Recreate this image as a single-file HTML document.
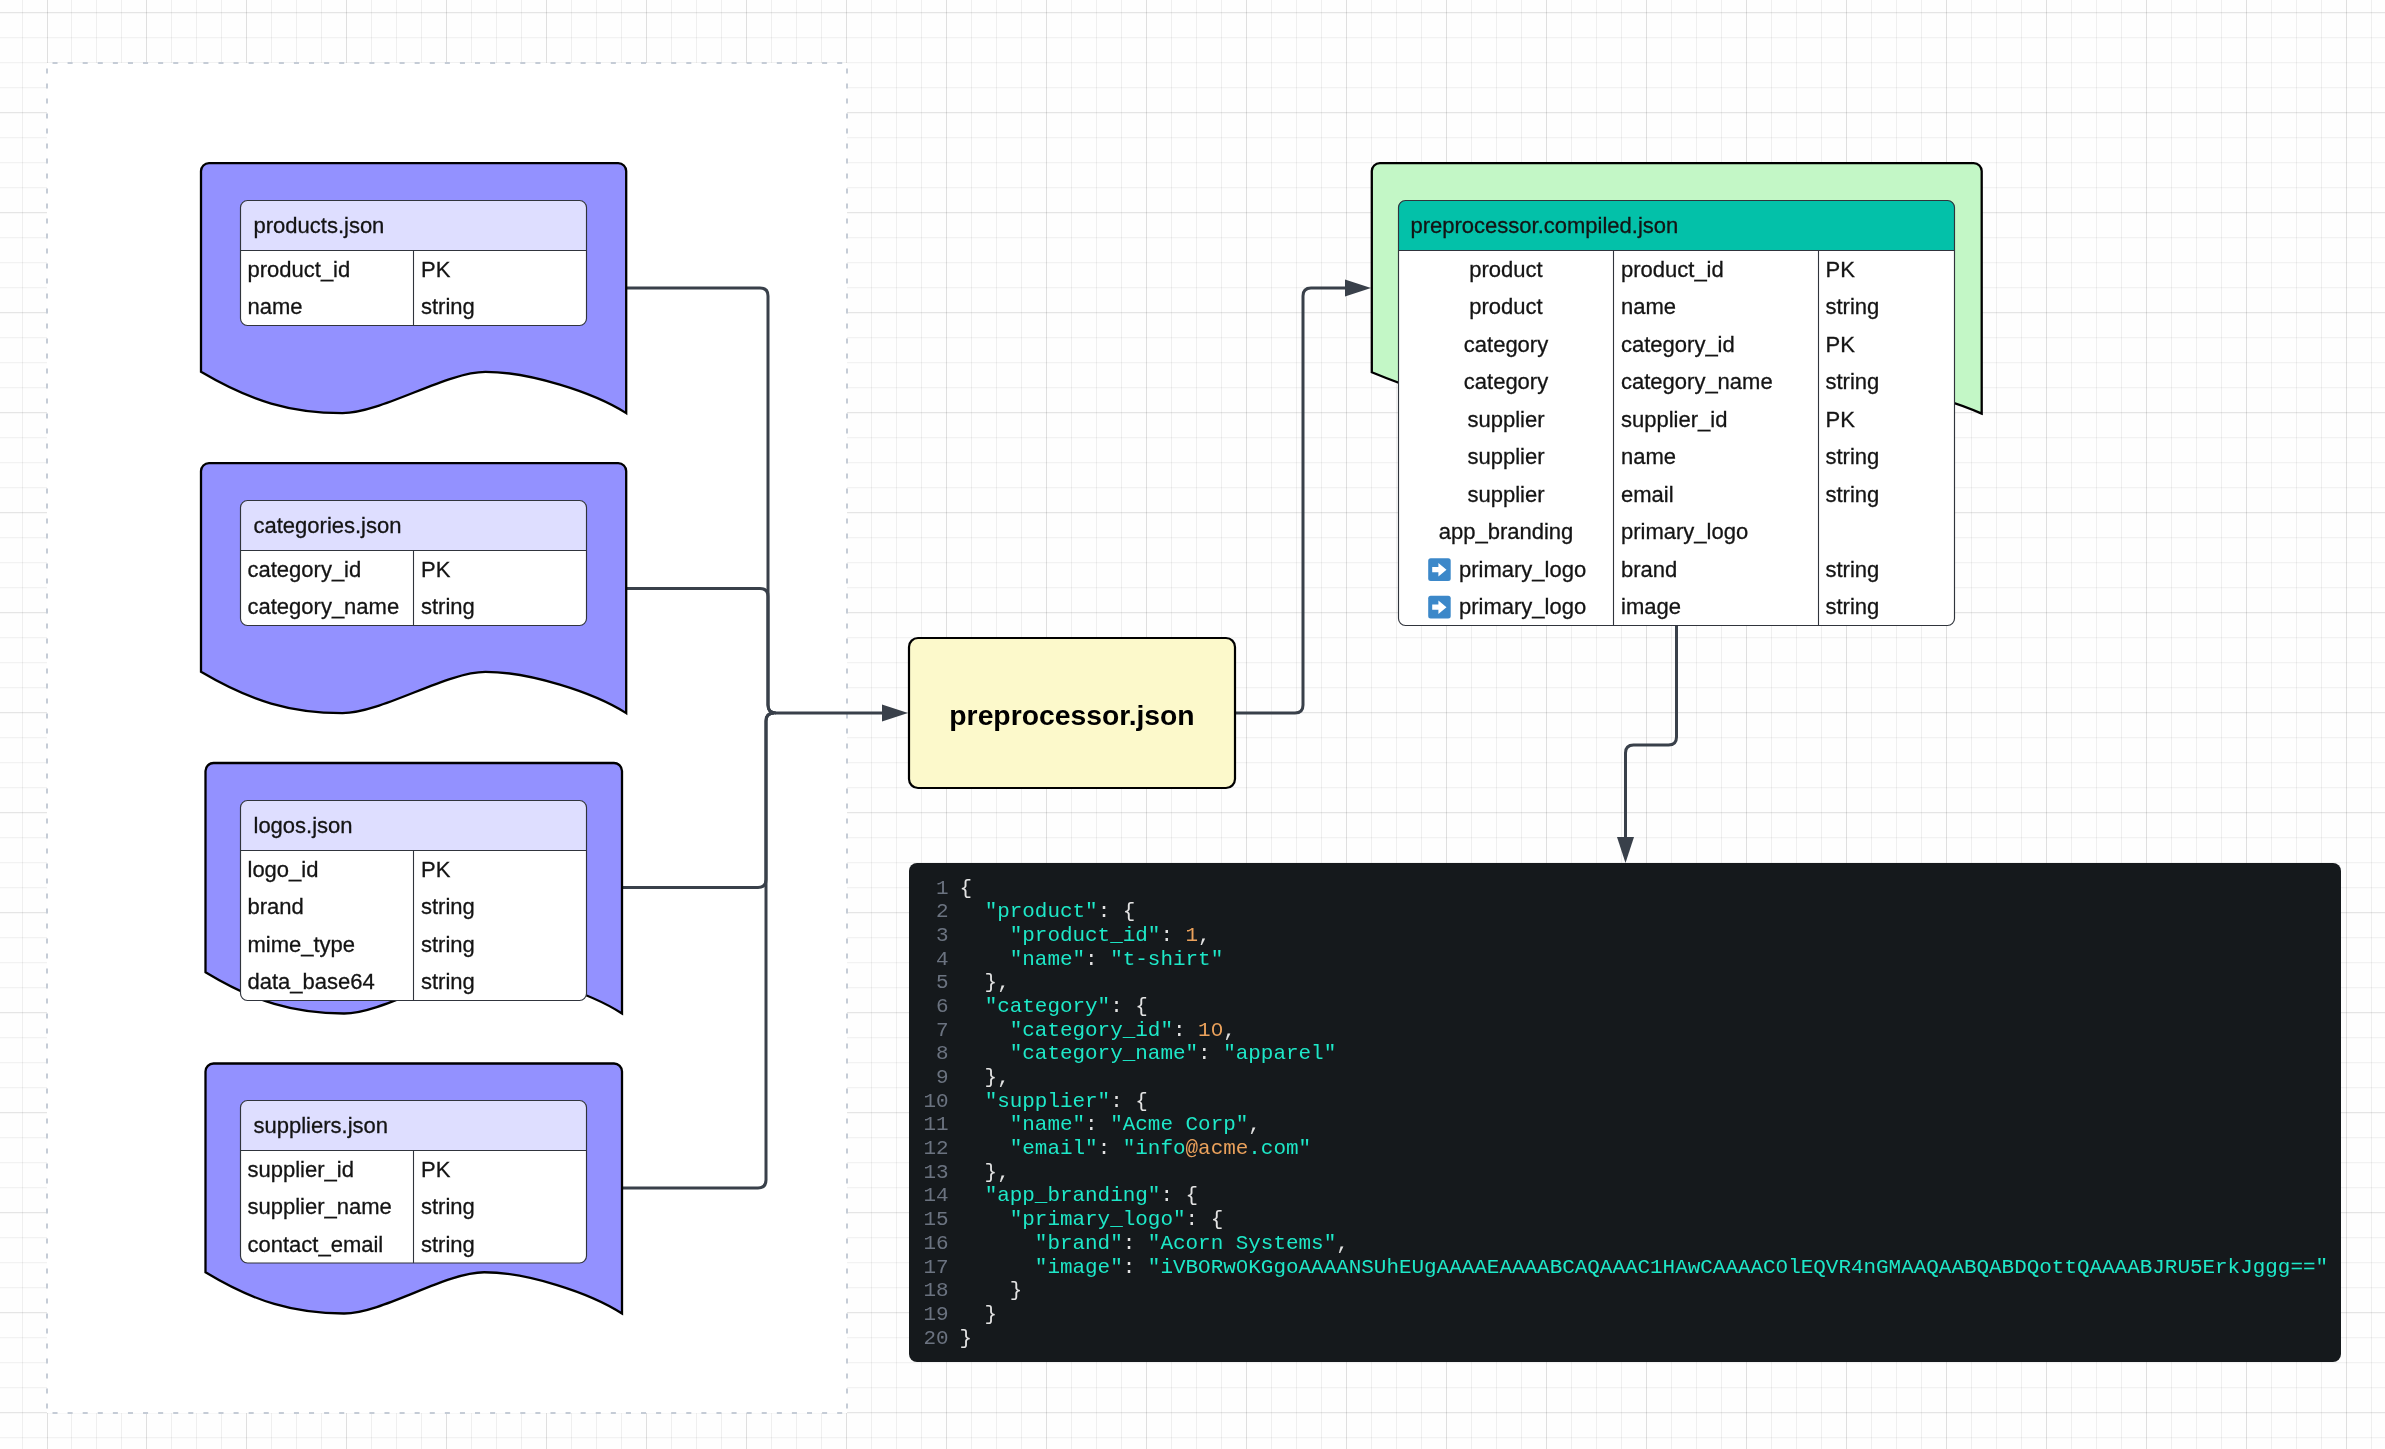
<!DOCTYPE html>
<html><head><meta charset="utf-8"><title>diagram</title>
<style>
html,body{margin:0;padding:0;background:#fefefe;}
body{width:2385px;height:1449px;overflow:hidden;position:relative;}
svg{position:absolute;left:0;top:0;will-change:transform;}
text{font-family:"Liberation Sans",sans-serif;}
.t{stroke:#141414;stroke-width:0.3px;}
.mono{font-family:"Liberation Mono",monospace;}
</style></head><body>
<svg width="2385" height="1449" viewBox="0 0 2385 1449">
<defs>
<pattern id="hminor" x="0" y="12.2" width="25" height="25" patternUnits="userSpaceOnUse"><rect x="0" y="0" width="25" height="1" fill="#000" fill-opacity="0.06"/></pattern>
<pattern id="hmajor" x="0" y="12.2" width="100" height="100" patternUnits="userSpaceOnUse"><rect x="0" y="0" width="100" height="1" fill="#000" fill-opacity="0.065"/></pattern>
<pattern id="vminor" x="21" y="0" width="25" height="25" patternUnits="userSpaceOnUse"><rect x="0" y="0" width="1" height="25" fill="#000" fill-opacity="0.06"/></pattern>
<pattern id="vmajor" x="46" y="0" width="100" height="100" patternUnits="userSpaceOnUse"><rect x="0" y="0" width="1" height="100" fill="#000" fill-opacity="0.065"/></pattern>
</defs>
<rect x="0" y="0" width="2385" height="1449" fill="#fefefe"/>
<rect x="0" y="0" width="2385" height="1449" fill="url(#hminor)"/>
<rect x="0" y="0" width="2385" height="1449" fill="url(#hmajor)"/>
<rect x="70" y="0" width="2315" height="1449" fill="url(#vminor)"/>
<rect x="70" y="0" width="2315" height="1449" fill="url(#vmajor)"/>
<rect x="22" y="0" width="1" height="1449" fill="#000" fill-opacity="0.06"/>
<rect x="47" y="0" width="1" height="1449" fill="#000" fill-opacity="0.06"/>
<rect x="47" y="0" width="1" height="1449" fill="#000" fill-opacity="0.065"/>

<rect x="47" y="63" width="800" height="1350" fill="#ffffff"/>
<path d="M47,63 L847,63" fill="none" stroke="#c5ccd6" stroke-width="2" stroke-dasharray="5.03 10.06" stroke-dashoffset="9.59"/>
<path d="M47,1413 L847,1413" fill="none" stroke="#c5ccd6" stroke-width="2" stroke-dasharray="5.03 10.06" stroke-dashoffset="9.59"/>
<path d="M847,63 L847,1413" fill="none" stroke="#c5ccd6" stroke-width="2" stroke-dasharray="5 10" stroke-dashoffset="9.5"/>
<path d="M47,63 L47,1413" fill="none" stroke="#c5ccd6" stroke-width="2" stroke-dasharray="5 10" stroke-dashoffset="9.5"/>
<path d="M626,288 L760,288 Q768,288 768,296 L768,705 Q768,713 776,713 L884,713" fill="none" stroke="#39404a" stroke-width="3" stroke-linejoin="round"/>
<path d="M626,588.5 L760,588.5 Q768,588.5 768,596.5 L768,705 Q768,713 776,713" fill="none" stroke="#39404a" stroke-width="3" stroke-linejoin="round"/>
<path d="M622,887.5 L758,887.5 Q766,887.5 766,879.5 L766,721 Q766,713 774,713" fill="none" stroke="#39404a" stroke-width="3" stroke-linejoin="round"/>
<path d="M622,1188 L758,1188 Q766,1188 766,1180 L766,721 Q766,713 774,713" fill="none" stroke="#39404a" stroke-width="3" stroke-linejoin="round"/>
<path d="M882,704.5 L908,713 L882,721.5 Z" fill="#39404a"/>
<path d="M1235,713 L1295,713 Q1303,713 1303,705 L1303,296 Q1303,288 1311,288 L1348,288" fill="none" stroke="#39404a" stroke-width="3" stroke-linejoin="round"/>
<path d="M1345,279.5 L1371,288 L1345,296.5 Z" fill="#39404a"/>
<path d="M1676.5,626 L1676.5,737 Q1676.5,745 1668.5,745 L1633.5,745 Q1625.5,745 1625.5,753 L1625.5,840" fill="none" stroke="#39404a" stroke-width="3" stroke-linejoin="round"/>
<path d="M1617,837 L1625.5,863 L1634,837 Z" fill="#39404a"/>
<path d="M201,171.1 A8,8 0 0 1 209,163.1 L618.2,163.1 A8,8 0 0 1 626.2,171.1 L626.2,413.1 C593.18,392.23 529.15,371.85 485.53,371.85 C446.52,371.85 381.48,413.10 342.47,413.10 C291.04,413.10 251.02,401.45 201.00,371.85 Z" fill="#9391ff" stroke="#000" stroke-width="2.3" stroke-linejoin="miter" stroke-miterlimit="10"/>
<rect x="240.5" y="200.5" width="346" height="125.0" rx="7" ry="7" fill="#ffffff"/>
<path d="M240.5,250.5 L240.5,207.5 Q240.5,200.5 247.5,200.5 L579.5,200.5 Q586.5,200.5 586.5,207.5 L586.5,250.5 Z" fill="#dedeff"/>
<line x1="240.5" y1="250.5" x2="586.5" y2="250.5" stroke="#30343c" stroke-width="1.15"/>
<line x1="413.5" y1="250.5" x2="413.5" y2="325.5" stroke="#30343c" stroke-width="1.1"/>
<rect x="240.5" y="200.5" width="346" height="125.0" rx="7" ry="7" fill="none" stroke="#30343c" stroke-width="1.15"/>
<text x="253.5" y="233.0" class="t" font-size="22" fill="#141414">products.json</text>
<text x="247.5" y="276.8" class="t" font-size="22" fill="#141414">product_id</text>
<text x="421.0" y="276.8" class="t" font-size="22" fill="#141414">PK</text>
<text x="247.5" y="314.3" class="t" font-size="22" fill="#141414">name</text>
<text x="421.0" y="314.3" class="t" font-size="22" fill="#141414">string</text>
<path d="M201,471.1 A8,8 0 0 1 209,463.1 L618.2,463.1 A8,8 0 0 1 626.2,471.1 L626.2,713.1 C593.18,692.23 529.15,671.85 485.53,671.85 C446.52,671.85 381.48,713.10 342.47,713.10 C291.04,713.10 251.02,701.45 201.00,671.85 Z" fill="#9391ff" stroke="#000" stroke-width="2.3" stroke-linejoin="miter" stroke-miterlimit="10"/>
<rect x="240.5" y="500.5" width="346" height="125.0" rx="7" ry="7" fill="#ffffff"/>
<path d="M240.5,550.5 L240.5,507.5 Q240.5,500.5 247.5,500.5 L579.5,500.5 Q586.5,500.5 586.5,507.5 L586.5,550.5 Z" fill="#dedeff"/>
<line x1="240.5" y1="550.5" x2="586.5" y2="550.5" stroke="#30343c" stroke-width="1.15"/>
<line x1="413.5" y1="550.5" x2="413.5" y2="625.5" stroke="#30343c" stroke-width="1.1"/>
<rect x="240.5" y="500.5" width="346" height="125.0" rx="7" ry="7" fill="none" stroke="#30343c" stroke-width="1.15"/>
<text x="253.5" y="533.0" class="t" font-size="22" fill="#141414">categories.json</text>
<text x="247.5" y="576.8" class="t" font-size="22" fill="#141414">category_id</text>
<text x="421.0" y="576.8" class="t" font-size="22" fill="#141414">PK</text>
<text x="247.5" y="614.3" class="t" font-size="22" fill="#141414">category_name</text>
<text x="421.0" y="614.3" class="t" font-size="22" fill="#141414">string</text>
<path d="M205.5,771 A8,8 0 0 1 213.5,763 L614.0,763 A8,8 0 0 1 622.0,771 L622.0,1013.5 C589.66,992.59 526.94,972.17 484.21,972.17 C445.99,972.17 382.29,1013.50 344.07,1013.50 C293.70,1013.50 254.50,1001.83 205.50,972.17 Z" fill="#9391ff" stroke="#000" stroke-width="2.3" stroke-linejoin="miter" stroke-miterlimit="10"/>
<rect x="240.5" y="800.5" width="346" height="200.0" rx="7" ry="7" fill="#ffffff"/>
<path d="M240.5,850.5 L240.5,807.5 Q240.5,800.5 247.5,800.5 L579.5,800.5 Q586.5,800.5 586.5,807.5 L586.5,850.5 Z" fill="#dedeff"/>
<line x1="240.5" y1="850.5" x2="586.5" y2="850.5" stroke="#30343c" stroke-width="1.15"/>
<line x1="413.5" y1="850.5" x2="413.5" y2="1000.5" stroke="#30343c" stroke-width="1.1"/>
<rect x="240.5" y="800.5" width="346" height="200.0" rx="7" ry="7" fill="none" stroke="#30343c" stroke-width="1.15"/>
<text x="253.5" y="833.0" class="t" font-size="22" fill="#141414">logos.json</text>
<text x="247.5" y="876.8" class="t" font-size="22" fill="#141414">logo_id</text>
<text x="421.0" y="876.8" class="t" font-size="22" fill="#141414">PK</text>
<text x="247.5" y="914.3" class="t" font-size="22" fill="#141414">brand</text>
<text x="421.0" y="914.3" class="t" font-size="22" fill="#141414">string</text>
<text x="247.5" y="951.8" class="t" font-size="22" fill="#141414">mime_type</text>
<text x="421.0" y="951.8" class="t" font-size="22" fill="#141414">string</text>
<text x="247.5" y="989.3" class="t" font-size="22" fill="#141414">data_base64</text>
<text x="421.0" y="989.3" class="t" font-size="22" fill="#141414">string</text>
<path d="M205.5,1071.5 A8,8 0 0 1 213.5,1063.5 L614.0,1063.5 A8,8 0 0 1 622.0,1071.5 L622.0,1313.5 C589.66,1292.63 526.94,1272.25 484.21,1272.25 C445.99,1272.25 382.29,1313.50 344.07,1313.50 C293.70,1313.50 254.50,1301.85 205.50,1272.25 Z" fill="#9391ff" stroke="#000" stroke-width="2.3" stroke-linejoin="miter" stroke-miterlimit="10"/>
<rect x="240.5" y="1100.5" width="346" height="162.5" rx="7" ry="7" fill="#ffffff"/>
<path d="M240.5,1150.5 L240.5,1107.5 Q240.5,1100.5 247.5,1100.5 L579.5,1100.5 Q586.5,1100.5 586.5,1107.5 L586.5,1150.5 Z" fill="#dedeff"/>
<line x1="240.5" y1="1150.5" x2="586.5" y2="1150.5" stroke="#30343c" stroke-width="1.15"/>
<line x1="413.5" y1="1150.5" x2="413.5" y2="1263.0" stroke="#30343c" stroke-width="1.1"/>
<rect x="240.5" y="1100.5" width="346" height="162.5" rx="7" ry="7" fill="none" stroke="#30343c" stroke-width="1.15"/>
<text x="253.5" y="1133.0" class="t" font-size="22" fill="#141414">suppliers.json</text>
<text x="247.5" y="1176.8" class="t" font-size="22" fill="#141414">supplier_id</text>
<text x="421.0" y="1176.8" class="t" font-size="22" fill="#141414">PK</text>
<text x="247.5" y="1214.3" class="t" font-size="22" fill="#141414">supplier_name</text>
<text x="421.0" y="1214.3" class="t" font-size="22" fill="#141414">string</text>
<text x="247.5" y="1251.8" class="t" font-size="22" fill="#141414">contact_email</text>
<text x="421.0" y="1251.8" class="t" font-size="22" fill="#141414">string</text>
<rect x="909" y="638" width="326" height="150" rx="9" ry="9" fill="#fcf9cb" stroke="#000" stroke-width="2.2"/>
<text x="1072" y="725" font-size="28.3" font-weight="bold" text-anchor="middle" fill="#000">preprocessor.json</text>
<path d="M1371.8,171.1 A8,8 0 0 1 1379.8,163.1 L1973.6999999999998,163.1 A8,8 0 0 1 1981.6999999999998,171.1 L1981.6999999999998,413.6 C1934.34,392.69 1842.50,372.27 1779.93,372.27 C1723.96,372.27 1630.68,413.60 1574.72,413.60 C1500.96,413.60 1443.55,401.93 1371.80,372.27 Z" fill="#c3f7c6" stroke="#000" stroke-width="2.3" stroke-linejoin="miter" stroke-miterlimit="10"/>
<rect x="1398.5" y="200.5" width="556" height="425.0" rx="7" ry="7" fill="#ffffff"/>
<path d="M1398.5,250.5 L1398.5,207.5 Q1398.5,200.5 1405.5,200.5 L1947.5,200.5 Q1954.5,200.5 1954.5,207.5 L1954.5,250.5 Z" fill="#03c1a9"/>
<line x1="1398.5" y1="250.5" x2="1954.5" y2="250.5" stroke="#30343c" stroke-width="1.15"/>
<line x1="1613.5" y1="250.5" x2="1613.5" y2="625.5" stroke="#30343c" stroke-width="1.1"/>
<line x1="1818.5" y1="250.5" x2="1818.5" y2="625.5" stroke="#30343c" stroke-width="1.1"/>
<rect x="1398.5" y="200.5" width="556" height="425.0" rx="7" ry="7" fill="none" stroke="#30343c" stroke-width="1.15"/>
<text x="1410.5" y="233.0" class="t" font-size="22" fill="#141414">preprocessor.compiled.json</text>
<text x="1506.0" y="276.8" class="t" font-size="22" text-anchor="middle" fill="#141414">product</text>
<text x="1621.0" y="276.8" class="t" font-size="22" fill="#141414">product_id</text>
<text x="1825.5" y="276.8" class="t" font-size="22" fill="#141414">PK</text>
<text x="1506.0" y="314.3" class="t" font-size="22" text-anchor="middle" fill="#141414">product</text>
<text x="1621.0" y="314.3" class="t" font-size="22" fill="#141414">name</text>
<text x="1825.5" y="314.3" class="t" font-size="22" fill="#141414">string</text>
<text x="1506.0" y="351.8" class="t" font-size="22" text-anchor="middle" fill="#141414">category</text>
<text x="1621.0" y="351.8" class="t" font-size="22" fill="#141414">category_id</text>
<text x="1825.5" y="351.8" class="t" font-size="22" fill="#141414">PK</text>
<text x="1506.0" y="389.3" class="t" font-size="22" text-anchor="middle" fill="#141414">category</text>
<text x="1621.0" y="389.3" class="t" font-size="22" fill="#141414">category_name</text>
<text x="1825.5" y="389.3" class="t" font-size="22" fill="#141414">string</text>
<text x="1506.0" y="426.8" class="t" font-size="22" text-anchor="middle" fill="#141414">supplier</text>
<text x="1621.0" y="426.8" class="t" font-size="22" fill="#141414">supplier_id</text>
<text x="1825.5" y="426.8" class="t" font-size="22" fill="#141414">PK</text>
<text x="1506.0" y="464.3" class="t" font-size="22" text-anchor="middle" fill="#141414">supplier</text>
<text x="1621.0" y="464.3" class="t" font-size="22" fill="#141414">name</text>
<text x="1825.5" y="464.3" class="t" font-size="22" fill="#141414">string</text>
<text x="1506.0" y="501.8" class="t" font-size="22" text-anchor="middle" fill="#141414">supplier</text>
<text x="1621.0" y="501.8" class="t" font-size="22" fill="#141414">email</text>
<text x="1825.5" y="501.8" class="t" font-size="22" fill="#141414">string</text>
<text x="1506.0" y="539.3" class="t" font-size="22" text-anchor="middle" fill="#141414">app_branding</text>
<text x="1621.0" y="539.3" class="t" font-size="22" fill="#141414">primary_logo</text>
<rect x="1428.2" y="558.3" width="22.5" height="22.6" rx="2.5" fill="#3c88c9"/>
<path d="M1432.2,567.0999999999999 L1438.4,567.0999999999999 L1438.4,562.9 L1446.5,569.65 L1438.4,576.4 L1438.4,572.1999999999999 L1432.2,572.1999999999999 Z" fill="#fff"/>
<text x="1459" y="576.8" class="t" font-size="22" fill="#141414">primary_logo</text>
<text x="1621.0" y="576.8" class="t" font-size="22" fill="#141414">brand</text>
<text x="1825.5" y="576.8" class="t" font-size="22" fill="#141414">string</text>
<rect x="1428.2" y="595.8" width="22.5" height="22.6" rx="2.5" fill="#3c88c9"/>
<path d="M1432.2,604.5999999999999 L1438.4,604.5999999999999 L1438.4,600.4 L1446.5,607.15 L1438.4,613.9 L1438.4,609.6999999999999 L1432.2,609.6999999999999 Z" fill="#fff"/>
<text x="1459" y="614.3" class="t" font-size="22" fill="#141414">primary_logo</text>
<text x="1621.0" y="614.3" class="t" font-size="22" fill="#141414">image</text>
<text x="1825.5" y="614.3" class="t" font-size="22" fill="#141414">string</text>
<rect x="909" y="863" width="1432" height="499" rx="8" ry="8" fill="#15191c"/>
<text class="mono" x="948.5" y="893.50" font-size="20.93" text-anchor="end" fill="#6b7380">1</text>
<text class="mono" x="959.5" y="893.50" font-size="20.93" xml:space="preserve"><tspan fill="#e3e3e3">{</tspan></text>
<text class="mono" x="948.5" y="917.19" font-size="20.93" text-anchor="end" fill="#6b7380">2</text>
<text class="mono" x="959.5" y="917.19" font-size="20.93" xml:space="preserve"><tspan fill="#e3e3e3">&#160;&#160;</tspan><tspan fill="#1ee8c8">"product"</tspan><tspan fill="#e3e3e3">:&#160;{</tspan></text>
<text class="mono" x="948.5" y="940.88" font-size="20.93" text-anchor="end" fill="#6b7380">3</text>
<text class="mono" x="959.5" y="940.88" font-size="20.93" xml:space="preserve"><tspan fill="#e3e3e3">&#160;&#160;&#160;&#160;</tspan><tspan fill="#1ee8c8">"product_id"</tspan><tspan fill="#e3e3e3">:&#160;</tspan><tspan fill="#eba25c">1</tspan><tspan fill="#e3e3e3">,</tspan></text>
<text class="mono" x="948.5" y="964.57" font-size="20.93" text-anchor="end" fill="#6b7380">4</text>
<text class="mono" x="959.5" y="964.57" font-size="20.93" xml:space="preserve"><tspan fill="#e3e3e3">&#160;&#160;&#160;&#160;</tspan><tspan fill="#1ee8c8">"name"</tspan><tspan fill="#e3e3e3">:&#160;</tspan><tspan fill="#1ee8c8">"t-shirt"</tspan></text>
<text class="mono" x="948.5" y="988.26" font-size="20.93" text-anchor="end" fill="#6b7380">5</text>
<text class="mono" x="959.5" y="988.26" font-size="20.93" xml:space="preserve"><tspan fill="#e3e3e3">&#160;&#160;},</tspan></text>
<text class="mono" x="948.5" y="1011.95" font-size="20.93" text-anchor="end" fill="#6b7380">6</text>
<text class="mono" x="959.5" y="1011.95" font-size="20.93" xml:space="preserve"><tspan fill="#e3e3e3">&#160;&#160;</tspan><tspan fill="#1ee8c8">"category"</tspan><tspan fill="#e3e3e3">:&#160;{</tspan></text>
<text class="mono" x="948.5" y="1035.64" font-size="20.93" text-anchor="end" fill="#6b7380">7</text>
<text class="mono" x="959.5" y="1035.64" font-size="20.93" xml:space="preserve"><tspan fill="#e3e3e3">&#160;&#160;&#160;&#160;</tspan><tspan fill="#1ee8c8">"category_id"</tspan><tspan fill="#e3e3e3">:&#160;</tspan><tspan fill="#eba25c">10</tspan><tspan fill="#e3e3e3">,</tspan></text>
<rect x="1215.20" y="1026.64" width="3.6" height="4.3" fill="#15191c"/>
<text class="mono" x="948.5" y="1059.33" font-size="20.93" text-anchor="end" fill="#6b7380">8</text>
<text class="mono" x="959.5" y="1059.33" font-size="20.93" xml:space="preserve"><tspan fill="#e3e3e3">&#160;&#160;&#160;&#160;</tspan><tspan fill="#1ee8c8">"category_name"</tspan><tspan fill="#e3e3e3">:&#160;</tspan><tspan fill="#1ee8c8">"apparel"</tspan></text>
<text class="mono" x="948.5" y="1083.02" font-size="20.93" text-anchor="end" fill="#6b7380">9</text>
<text class="mono" x="959.5" y="1083.02" font-size="20.93" xml:space="preserve"><tspan fill="#e3e3e3">&#160;&#160;},</tspan></text>
<text class="mono" x="948.5" y="1106.71" font-size="20.93" text-anchor="end" fill="#6b7380">10</text>
<text class="mono" x="959.5" y="1106.71" font-size="20.93" xml:space="preserve"><tspan fill="#e3e3e3">&#160;&#160;</tspan><tspan fill="#1ee8c8">"supplier"</tspan><tspan fill="#e3e3e3">:&#160;{</tspan></text>
<text class="mono" x="948.5" y="1130.40" font-size="20.93" text-anchor="end" fill="#6b7380">11</text>
<text class="mono" x="959.5" y="1130.40" font-size="20.93" xml:space="preserve"><tspan fill="#e3e3e3">&#160;&#160;&#160;&#160;</tspan><tspan fill="#1ee8c8">"name"</tspan><tspan fill="#e3e3e3">:&#160;</tspan><tspan fill="#1ee8c8">"Acme&#160;Corp"</tspan><tspan fill="#e3e3e3">,</tspan></text>
<text class="mono" x="948.5" y="1154.09" font-size="20.93" text-anchor="end" fill="#6b7380">12</text>
<text class="mono" x="959.5" y="1154.09" font-size="20.93" xml:space="preserve"><tspan fill="#e3e3e3">&#160;&#160;&#160;&#160;</tspan><tspan fill="#1ee8c8">"email"</tspan><tspan fill="#e3e3e3">:&#160;</tspan><tspan fill="#1ee8c8">"info</tspan><tspan fill="#eba25c">@acme</tspan><tspan fill="#1ee8c8">.com"</tspan></text>
<text class="mono" x="948.5" y="1177.78" font-size="20.93" text-anchor="end" fill="#6b7380">13</text>
<text class="mono" x="959.5" y="1177.78" font-size="20.93" xml:space="preserve"><tspan fill="#e3e3e3">&#160;&#160;},</tspan></text>
<text class="mono" x="948.5" y="1201.47" font-size="20.93" text-anchor="end" fill="#6b7380">14</text>
<text class="mono" x="959.5" y="1201.47" font-size="20.93" xml:space="preserve"><tspan fill="#e3e3e3">&#160;&#160;</tspan><tspan fill="#1ee8c8">"app_branding"</tspan><tspan fill="#e3e3e3">:&#160;{</tspan></text>
<text class="mono" x="948.5" y="1225.16" font-size="20.93" text-anchor="end" fill="#6b7380">15</text>
<text class="mono" x="959.5" y="1225.16" font-size="20.93" xml:space="preserve"><tspan fill="#e3e3e3">&#160;&#160;&#160;&#160;</tspan><tspan fill="#1ee8c8">"primary_logo"</tspan><tspan fill="#e3e3e3">:&#160;{</tspan></text>
<text class="mono" x="948.5" y="1248.85" font-size="20.93" text-anchor="end" fill="#6b7380">16</text>
<text class="mono" x="959.5" y="1248.85" font-size="20.93" xml:space="preserve"><tspan fill="#e3e3e3">&#160;&#160;&#160;&#160;&#160;&#160;</tspan><tspan fill="#1ee8c8">"brand"</tspan><tspan fill="#e3e3e3">:&#160;</tspan><tspan fill="#1ee8c8">"Acorn&#160;Systems"</tspan><tspan fill="#e3e3e3">,</tspan></text>
<text class="mono" x="948.5" y="1272.54" font-size="20.93" text-anchor="end" fill="#6b7380">17</text>
<text class="mono" x="959.5" y="1272.54" font-size="20.93" xml:space="preserve"><tspan fill="#e3e3e3">&#160;&#160;&#160;&#160;&#160;&#160;</tspan><tspan fill="#1ee8c8">"image"</tspan><tspan fill="#e3e3e3">:&#160;</tspan><tspan fill="#1ee8c8">"iVBORw0KGgoAAAANSUhEUgAAAAEAAAABCAQAAAC1HAwCAAAAC0lEQVR4nGMAAQAABQABDQottQAAAABJRU5ErkJggg=="</tspan></text>
<rect x="1240.32" y="1263.54" width="3.6" height="4.3" fill="#15191c"/>
<rect x="1780.40" y="1263.54" width="3.6" height="4.3" fill="#15191c"/>
<text class="mono" x="948.5" y="1296.23" font-size="20.93" text-anchor="end" fill="#6b7380">18</text>
<text class="mono" x="959.5" y="1296.23" font-size="20.93" xml:space="preserve"><tspan fill="#e3e3e3">&#160;&#160;&#160;&#160;}</tspan></text>
<text class="mono" x="948.5" y="1319.92" font-size="20.93" text-anchor="end" fill="#6b7380">19</text>
<text class="mono" x="959.5" y="1319.92" font-size="20.93" xml:space="preserve"><tspan fill="#e3e3e3">&#160;&#160;}</tspan></text>
<text class="mono" x="948.5" y="1343.61" font-size="20.93" text-anchor="end" fill="#6b7380">20</text>
<text class="mono" x="959.5" y="1343.61" font-size="20.93" xml:space="preserve"><tspan fill="#e3e3e3">}</tspan></text>
</svg></body></html>
